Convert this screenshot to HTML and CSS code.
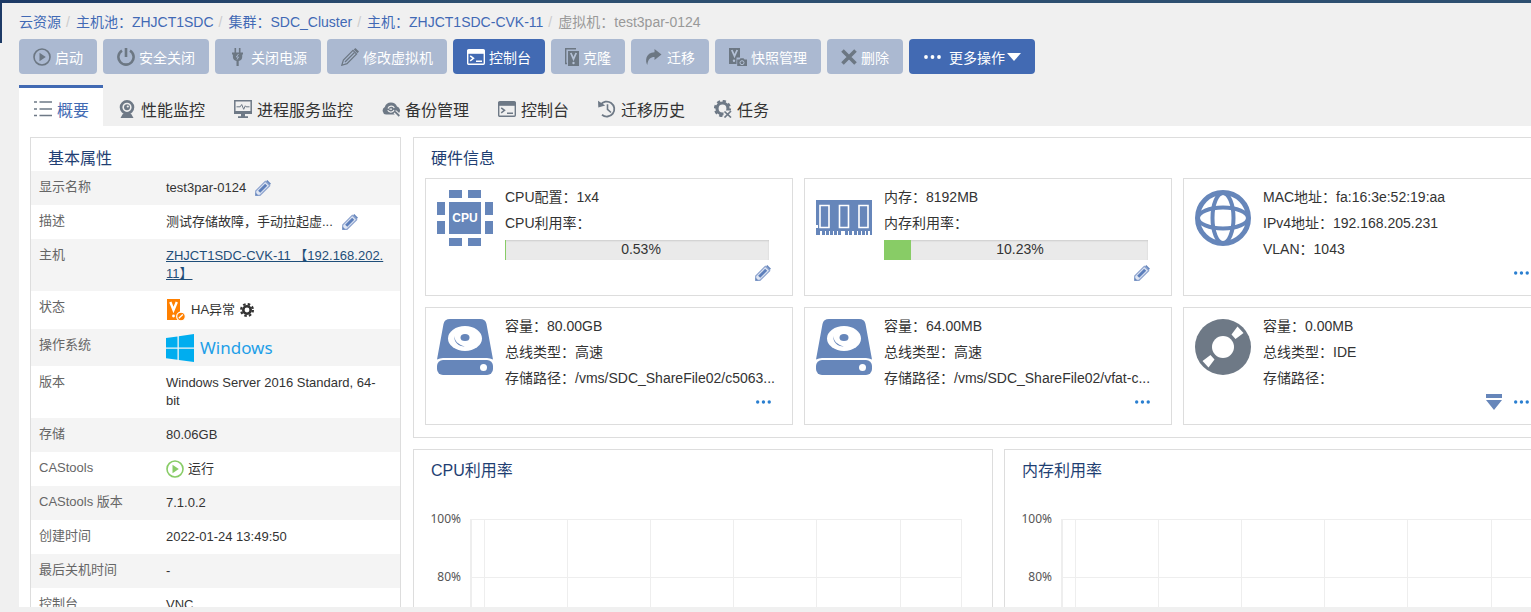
FILE: index.html
```html
<!DOCTYPE html>
<html lang="zh-CN">
<head>
<meta charset="UTF-8">
<meta name="viewport" content="width=device-width, initial-scale=1.0">
<title>test3par-0124</title>
<link rel="stylesheet" href="styles.css">
</head>
<body>

<!-- shared icons -->
<svg class="sprite" aria-hidden="true">
  <symbol id="i-play" viewBox="0 0 18 18">
    <circle cx="9" cy="9" r="8" fill="none" stroke="currentColor" stroke-width="1.6"/>
    <path d="M6.5 4.8v8.4L12.8 9z" fill="currentColor"/>
  </symbol>
  <symbol id="i-power" viewBox="0 0 18 18">
    <path d="M5 2.6A7.6 7.6 0 1 0 13 2.6" fill="none" stroke="currentColor" stroke-width="2.6"/>
    <path d="M9 0v9" stroke="currentColor" stroke-width="2.6"/>
  </symbol>
  <symbol id="i-plug" viewBox="0 0 18 18">
    <path d="M6.3 0v5M10.7 0v5" stroke="currentColor" stroke-width="1.6"/>
    <path d="M3 4.500h11v2h-.8v2.500c0 2.200-1.500 3.700-3.500 4V18H7.500v-5c-2-.3-3.600-1.800-3.600-4V6.500H3z" fill="currentColor"/>
    <path d="M9.500 6L7.300 9h2.200L8 11.500" fill="none" stroke="#aab9d1" stroke-width=".9"/>
  </symbol>
  <symbol id="i-pencil-line" viewBox="0 0 18 18">
    <path d="M.8 17.200L2.400 12 12 2.400l3.600 3.600L6 15.600z" fill="none" stroke="currentColor" stroke-width="1.200"/>
    <path d="M4 14L13.500 4.500" stroke="currentColor" stroke-width="1.200"/>
    <path d="M12.800 1.600L14.400 0 18 3.600l-1.600 1.600z" fill="currentColor"/>
  </symbol>
  <symbol id="i-console" viewBox="0 0 18 16">
    <rect x=".7" y=".7" width="16.600" height="14.600" rx="1" fill="none" stroke="currentColor" stroke-width="1.400"/>
    <path d="M.5 1h17v3.800H.5z" fill="currentColor"/>
    <path d="M3.200 6.800l3.300 2.500-3.300 2.500M9 12.200h6" fill="none" stroke="currentColor" stroke-width="1.500"/>
  </symbol>
  <symbol id="i-clone" viewBox="0 0 14 18">
    <path d="M11 .7H.7V15.500H2" fill="none" stroke="currentColor" stroke-width="1.400"/>
    <path d="M3 3h11v15H3z" fill="currentColor"/>
    <path d="M5.800 5l2.700 6L11.200 5" fill="none" stroke="#b4c1d6" stroke-width="1.800"/>
    <circle cx="8.500" cy="15" r="1.200" fill="#b4c1d6"/>
  </symbol>
  <symbol id="i-move" viewBox="0 0 18 18">
    <path d="M9.500 1l7 5.500-7 5.500V9C5.500 9 3 11 2.300 17 0 13 .5 4.500 9.500 4.200z" fill="currentColor"/>
  </symbol>
  <symbol id="i-snapshot" viewBox="0 0 18 18">
    <path d="M0 0h11v9.500H7.500V16H0z" fill="currentColor"/>
    <path d="M2.800 2l2.700 6L8.200 2" fill="none" stroke="#b4c1d6" stroke-width="1.800"/>
    <circle cx="5" cy="12.700" r="1.200" fill="#b4c1d6"/>
    <path d="M8.200 11.500h2.300l1-1.200h3l1 1.200H18V18H8.200z" fill="currentColor"/>
    <circle cx="13" cy="14.700" r="2" fill="none" stroke="#b4c1d6"/>
  </symbol>
  <symbol id="i-cross" viewBox="0 0 16 16">
    <path d="M1.500 1.500l13 13M14.500 1.500l-13 13" stroke="currentColor" stroke-width="3.600"/>
  </symbol>
  <symbol id="i-dots" viewBox="0 0 18 18">
    <circle cx="3" cy="9" r="1.900" fill="currentColor"/>
    <circle cx="9.500" cy="9" r="1.900" fill="currentColor"/>
    <circle cx="16" cy="9" r="1.900" fill="currentColor"/>
  </symbol>
  <symbol id="i-list" viewBox="0 0 18 18">
    <path d="M0 2h3M0 9h3M0 15.500h3M5.500 2H18M5.500 9H18M5.500 15.500H18" stroke="currentColor" stroke-width="1.600"/>
  </symbol>
  <symbol id="i-webcam" viewBox="0 0 18 18">
    <path fill-rule="evenodd" d="M9 0a7.300 7.300 0 1 0 0 14.600A7.300 7.300 0 0 0 9 0zm0 2.700a4.600 4.600 0 1 1 0 9.200 4.600 4.600 0 0 1 0-9.200z" fill="currentColor"/>
    <circle cx="9" cy="7.300" r="3" fill="currentColor"/>
    <circle cx="9.800" cy="6.500" r="1.100" fill="#f0f0f0"/>
    <path d="M5 13.500h8l2.500 4.500h-13z" fill="currentColor"/>
  </symbol>
  <symbol id="i-monitor" viewBox="0 0 18 18">
    <path d="M.8.8h16.400v12.400H.8z" fill="none" stroke="currentColor" stroke-width="1.500"/>
    <path d="M0 11h18v3H0zM7 14h4v2.300h3V18H4v-1.700h3z" fill="currentColor"/>
    <path d="M2.500 6.800h3.700l1.500-2.300 2 4.800 1.600-3.500.8 1h3.400" fill="none" stroke="currentColor"/>
  </symbol>
  <symbol id="i-cloud" viewBox="0 0 18 18">
    <path d="M4 14.500A4 4 0 0 1 2.800 7 6.500 6.500 0 0 1 15 6.500a4 4 0 0 1 2 6.500l-3.500-3 .5 4.500z" fill="currentColor"/>
    <path d="M6 8.500C7 5.500 11 5.500 12.300 8M12 10c-1 2.700-5 2.700-6.300.3M7.500 9.200H10" fill="none" stroke="#f0f0f0" stroke-width="1.200"/>
    <path d="M13 12l4.300 4.500" stroke="#f0f0f0" stroke-width="4"/>
    <path d="M13 11.700l4.300 4.300" stroke="currentColor" stroke-width="1.800"/>
  </symbol>
  <symbol id="i-history" viewBox="0 0 18 18">
    <path d="M2.500 5A7.500 7.500 0 1 1 4 14.800" fill="none" stroke="currentColor" stroke-width="1.800"/>
    <path d="M0 .8L7.200 5.500.3 7.500z" fill="currentColor"/>
    <path d="M9.500 4.300v5l3.500 3.200" fill="none" stroke="currentColor" stroke-width="1.600"/>
  </symbol>
  <symbol id="i-task" viewBox="0 0 18 18">
    <circle cx="8.500" cy="8.500" r="5.500" fill="none" stroke="currentColor" stroke-width="3.200"/>
    <circle cx="8.500" cy="8.500" r="7.500" fill="none" stroke="currentColor" stroke-width="2.200" stroke-dasharray="3.300 2.590"/>
    <path d="M9.500 10.500h8.500V18H9.500z" fill="#f0f0f0"/>
    <path d="M10.500 11.500l6.500 6M17 11l-6.500 6.500" stroke="currentColor" stroke-width="1.700"/>
  </symbol>
  <symbol id="i-edit" viewBox="0 0 16 16">
    <path d="M.7 15.300V11L10.300 1.300 14.700 5.700 5 15.300z" fill="#dfe6f3" stroke="#8fa5cf" stroke-width="1.200"/>
    <path d="M4.200 11.800l7-7" stroke="#5d7fbb" stroke-width="3"/>
    <path d="M11 1.200L12.300 0 16 3.700l-1.300 1.300zM.5 12.500l3 3H.5z" fill="#6787bd"/>
  </symbol>
  <symbol id="i-gear" viewBox="0 0 14 14">
    <circle cx="7" cy="7" r="3.700" fill="none" stroke="currentColor" stroke-width="2.600"/>
    <circle cx="7" cy="7" r="5.900" fill="none" stroke="currentColor" stroke-width="2.200" stroke-dasharray="2.500 2.134"/>
  </symbol>
  <symbol id="i-vm-alarm" viewBox="0 0 20 22">
    <path d="M1 0h13v21H1z" fill="#ff8000"/>
    <path d="M4.300 3l3.200 8L10.800 3" fill="none" stroke="#fff" stroke-width="2.400"/>
    <circle cx="7.500" cy="17" r="1.400" fill="#fff"/>
    <circle cx="15" cy="17.500" r="4.300" fill="#ff8000" stroke="#fff" stroke-width="1.200"/>
    <path d="M12.800 19.300l4-3.700" stroke="#fff" stroke-width="1.300"/>
  </symbol>
  <symbol id="i-windows" viewBox="0 0 28 28">
    <path d="M0 4l11.500-1.600v11.100H0zM12.800 2.200L28 0v13.500H12.800zM0 14.700h11.500v11.100L0 24.200zM12.800 14.700H28V28l-15.200-2.100z" fill="#00adef"/>
  </symbol>
  <symbol id="i-disk" viewBox="0 0 56 56">
    <path d="M13 0h30q5.500 0 6.500 5L56 40.500q-3-1.500-6-1.500H6q-3 0-6 1.500L6.500 5Q7.500 0 13 0z" fill="#6686ba"/>
    <rect x="0" y="41" width="56" height="15" rx="6" fill="#6686ba"/>
    <ellipse cx="28" cy="19.500" rx="17" ry="12.500" fill="#fff"/>
    <ellipse cx="28" cy="18.500" rx="4.500" ry="3.500" fill="#6686ba"/>
    <path d="M17.500 17C17.500 22 21 25.500 28 27.500 21 27.500 16.500 22.500 17.500 17z" fill="#6686ba"/>
    <circle cx="46.500" cy="48.500" r="3.500" fill="#fff"/>
  </symbol>
  <symbol id="i-cpu" viewBox="0 0 56 56">
    <path d="M12 0h13v8H12zM31 0h13v8H31zM12 48h13v8H12zM31 48h13v8H31zM0 12h8v13H0zM0 31h8v13H0zM48 12h8v13h-8zM48 31h8v13h-8zM12 12h32v32H12z" fill="#6686ba"/>
    <text x="28" y="32" text-anchor="middle" class="chip-text">CPU</text>
  </symbol>
  <symbol id="i-memory" viewBox="0 0 56 56">
    <path d="M0 10h56v31H0zM0 41h4v4H0zM6 41h3v4H6zM10 41h3v4h-3zM14 41h3v4h-3zM18 41h3v4h-3zM22 41h3v4h-3zM29 41h3v4h-3zM33 41h3v4h-3zM38 41h3v4h-3zM42 41h3v4h-3zM46 41h3v4h-3zM50 41h2v4h-2zM54 41h2v4h-2z" fill="#6686ba"/>
    <path d="M4 15.500h9v22H4zM23.500 15.500h9v22h-9zM43 15.500h9v22h-9z" fill="#6686ba" stroke="#fff" stroke-width="1.600"/>
    <path d="M0 35h2v3H0z" fill="#fff"/>
  </symbol>
  <symbol id="i-globe" viewBox="0 0 56 56">
    <g fill="none" stroke="#6686ba" stroke-width="4">
      <circle cx="28" cy="28" r="25.500" stroke-width="5"/>
      <ellipse cx="28" cy="28" rx="10.500" ry="25"/>
      <ellipse cx="28" cy="28" rx="25" ry="10.500"/>
    </g>
  </symbol>
  <symbol id="i-disc" viewBox="0 0 56 56">
    <circle cx="28" cy="28" r="28" fill="#6e7986"/>
    <circle cx="28" cy="28" r="11" fill="#fff"/>
    <path d="M36.500 15.500L42.500 7.500l6 6.500-8 6zM19.500 40.500L13.500 48.500l-6-6.500 8-6z" fill="#fff"/>
  </symbol>
  <symbol id="i-eject" viewBox="0 0 16 16">
    <path d="M0 0h16v4H0zM0 6h16L8 16z" fill="#6686ba"/>
  </symbol>
</svg>

<div class="topbar"></div>
<div class="page">
  <div class="side"></div>
  <main class="main">

    <nav class="breadcrumb" aria-label="路径">
      <a href="#">云资源</a>
      <a href="#">主机池：ZHJCT1SDC</a>
      <a href="#">集群：SDC_Cluster</a>
      <a href="#">主机：ZHJCT1SDC-CVK-11</a>
      <span>虚拟机：test3par-0124</span>
    </nav>

    <div class="toolbar">
      <button class="btn" disabled><svg class="icon"><use href="#i-play"/></svg>启动</button>
      <button class="btn" disabled><svg class="icon"><use href="#i-power"/></svg>安全关闭</button>
      <button class="btn" disabled><svg class="icon"><use href="#i-plug"/></svg>关闭电源</button>
      <button class="btn" disabled><svg class="icon"><use href="#i-pencil-line"/></svg>修改虚拟机</button>
      <button class="btn"><svg class="icon"><use href="#i-console"/></svg>控制台</button>
      <button class="btn" disabled><svg class="icon icon-narrow"><use href="#i-clone"/></svg>克隆</button>
      <button class="btn" disabled><svg class="icon"><use href="#i-move"/></svg>迁移</button>
      <button class="btn" disabled><svg class="icon"><use href="#i-snapshot"/></svg>快照管理</button>
      <button class="btn" disabled><svg class="icon icon-cross"><use href="#i-cross"/></svg>删除</button>
      <button class="btn btn-more"><svg class="icon"><use href="#i-dots"/></svg>更多操作<span class="caret"></span></button>
    </div>

    <nav class="tabs" aria-label="标签">
      <a class="tab active" href="#"><svg class="icon"><use href="#i-list"/></svg>概要</a>
      <a class="tab" href="#"><svg class="icon"><use href="#i-webcam"/></svg>性能监控</a>
      <a class="tab" href="#"><svg class="icon"><use href="#i-monitor"/></svg>进程服务监控</a>
      <a class="tab" href="#"><svg class="icon"><use href="#i-cloud"/></svg>备份管理</a>
      <a class="tab" href="#"><svg class="icon"><use href="#i-console"/></svg>控制台</a>
      <a class="tab" href="#"><svg class="icon"><use href="#i-history"/></svg>迁移历史</a>
      <a class="tab" href="#"><svg class="icon"><use href="#i-task"/></svg>任务</a>
    </nav>

    <div class="content">
      <div class="dashboard">

        <section class="panel props">
          <h2 class="panel-title">基本属性</h2>
          <table class="props-table">
            <tr>
              <th scope="row">显示名称</th>
              <td><div class="value">test3par-0124<button class="icon-btn" aria-label="编辑"><svg><use href="#i-edit"/></svg></button></div></td>
            </tr>
            <tr>
              <th scope="row">描述</th>
              <td><div class="value">测试存储故障，手动拉起虚...<button class="icon-btn" aria-label="编辑"><svg><use href="#i-edit"/></svg></button></div></td>
            </tr>
            <tr>
              <th scope="row">主机</th>
              <td><a class="host" href="#">ZHJCT1SDC-CVK-11 【192.168.202.<br>11】</a></td>
            </tr>
            <tr>
              <th scope="row">状态</th>
              <td><div class="value state"><svg class="vm-icon"><use href="#i-vm-alarm"/></svg>HA异常<svg class="gear"><use href="#i-gear"/></svg></div></td>
            </tr>
            <tr>
              <th scope="row">操作系统</th>
              <td class="os-cell"><div class="value os"><svg class="os-icon"><use href="#i-windows"/></svg>Windows</div></td>
            </tr>
            <tr>
              <th scope="row">版本</th>
              <td>Windows Server 2016 Standard, 64-<br>bit</td>
            </tr>
            <tr>
              <th scope="row">存储</th>
              <td>80.06GB</td>
            </tr>
            <tr>
              <th scope="row">CAStools</th>
              <td><div class="value run"><svg class="icon"><use href="#i-play"/></svg>运行</div></td>
            </tr>
            <tr>
              <th scope="row">CAStools 版本</th>
              <td>7.1.0.2</td>
            </tr>
            <tr>
              <th scope="row">创建时间</th>
              <td>2022-01-24 13:49:50</td>
            </tr>
            <tr>
              <th scope="row">最后关机时间</th>
              <td>-</td>
            </tr>
            <tr>
              <th scope="row">控制台</th>
              <td>VNC</td>
            </tr>
          </table>
        </section>

        <div class="right">
          <section class="panel">
            <h2 class="panel-title">硬件信息</h2>
            <div class="cards">

              <div class="card">
                <svg class="card-icon"><use href="#i-cpu"/></svg>
                <div class="card-info">
                  <p>CPU配置：1x4</p>
                  <p>CPU利用率：</p>
                  <div class="progress"><div class="bar" style="width: 0.53%"></div><span>0.53%</span></div>
                </div>
                <div class="card-actions">
                  <button class="icon-btn" aria-label="编辑"><svg><use href="#i-edit"/></svg></button>
                </div>
              </div>

              <div class="card">
                <svg class="card-icon"><use href="#i-memory"/></svg>
                <div class="card-info">
                  <p>内存：8192MB</p>
                  <p>内存利用率：</p>
                  <div class="progress"><div class="bar" style="width: 10.23%"></div><span>10.23%</span></div>
                </div>
                <div class="card-actions">
                  <button class="icon-btn" aria-label="编辑"><svg><use href="#i-edit"/></svg></button>
                </div>
              </div>

              <div class="card">
                <svg class="card-icon"><use href="#i-globe"/></svg>
                <div class="card-info">
                  <p>MAC地址：fa:16:3e:52:19:aa</p>
                  <p>IPv4地址：192.168.205.231</p>
                  <p>VLAN：1043</p>
                </div>
                <div class="card-actions">
                  <button class="icon-btn" aria-label="更多"><svg><use href="#i-dots"/></svg></button>
                </div>
              </div>

              <div class="card">
                <svg class="card-icon"><use href="#i-disk"/></svg>
                <div class="card-info">
                  <p>容量：80.00GB</p>
                  <p>总线类型：高速</p>
                  <p>存储路径：/vms/SDC_ShareFile02/c5063...</p>
                </div>
                <div class="card-actions">
                  <button class="icon-btn" aria-label="更多"><svg><use href="#i-dots"/></svg></button>
                </div>
              </div>

              <div class="card">
                <svg class="card-icon"><use href="#i-disk"/></svg>
                <div class="card-info">
                  <p>容量：64.00MB</p>
                  <p>总线类型：高速</p>
                  <p>存储路径：/vms/SDC_ShareFile02/vfat-c...</p>
                </div>
                <div class="card-actions">
                  <button class="icon-btn" aria-label="更多"><svg><use href="#i-dots"/></svg></button>
                </div>
              </div>

              <div class="card">
                <svg class="card-icon"><use href="#i-disc"/></svg>
                <div class="card-info">
                  <p>容量：0.00MB</p>
                  <p>总线类型：IDE</p>
                  <p>存储路径：</p>
                </div>
                <div class="card-actions">
                  <button class="icon-btn" aria-label="弹出"><svg><use href="#i-eject"/></svg></button>
                  <button class="icon-btn" aria-label="更多"><svg><use href="#i-dots"/></svg></button>
                </div>
              </div>

            </div>
          </section>

          <div class="charts">
            <section class="panel">
              <h2 class="panel-title">CPU利用率</h2>
              <svg class="chart" width="578" height="320">
                <path d="M57 36H548M57 94H548M57 152H548M57 210H548M57 268H548" class="grid-line"/>
                <path d="M70 36V326M153 36V326M236 36V326M319 36V326M402 36V326M486 36V326M547 36V326" class="grid-line"/>
                <path d="M57 36V326" class="axis-line"/>
                <text x="47" y="40">100%</text>
                <text x="47" y="98">80%</text>
              </svg>
            </section>
            <section class="panel">
              <h2 class="panel-title">内存利用率</h2>
              <svg class="chart" width="578" height="320">
                <path d="M57 36H548M57 94H548M57 152H548M57 210H548M57 268H548" class="grid-line"/>
                <path d="M70 36V326M153 36V326M236 36V326M319 36V326M402 36V326M486 36V326M547 36V326" class="grid-line"/>
                <path d="M57 36V326" class="axis-line"/>
                <text x="47" y="40">100%</text>
                <text x="47" y="98">80%</text>
              </svg>
            </section>
          </div>
        </div>

      </div>
    </div>
  </main>
</div>

</body>
</html>
```
FILE: styles.css
```css
* {
  box-sizing: border-box;
}
body {
  margin: 0;
  height: 100vh;
  display: flex;
  flex-direction: column;
  overflow: hidden;
  background-color: #f0f0f0;
  color: #333;
  font-family: "Liberation Sans", "Noto Sans CJK SC", sans-serif;
  font-size: 14px;
}
a {
  text-decoration: none;
}
button {
  font-family: inherit;
  font-size: 14px;
  border: none;
  padding: 0;
  cursor: pointer;
}
h2, p {
  margin: 0;
  font-weight: normal;
}
.sprite {
  display: none;
}
.icon {
  width: 18px;
  height: 18px;
  flex: none;
}

/* frame */
.topbar {
  height: 3px;
  flex: none;
  background: linear-gradient(to right, #1d3a66, #2d4f70 30%);
}
.page {
  flex: 1;
  min-height: 0;
  display: flex;
}
.side {
  width: 2px;
  background: linear-gradient(#1d3a66 40px, #f0f0f0 40px);
}
.main {
  flex: 1;
  min-width: 0;
  display: flex;
  flex-direction: column;
  padding: 0 0 5px 17px;
}

/* breadcrumb */
.breadcrumb {
  display: flex;
  padding-top: 9px;
  line-height: 20px;
  color: #999;
}
.breadcrumb a {
  color: #4169b5;
}
.breadcrumb a::after {
  content: "/";
  padding: 0 6px 0 5px;
  color: #ccc;
}

/* buttons */
.toolbar {
  display: flex;
  gap: 6px;
  padding-top: 7px;
}
.btn {
  display: flex;
  align-items: center;
  gap: 4px;
  height: 35px;
  padding: 0 14px;
  border-radius: 4px;
  background-color: #426ab3;
  color: #fff;
}
.btn:disabled {
  background-color: #abb9d1;
  cursor: default;
}
.btn:disabled .icon {
  color: #6c7783;
}
.icon-narrow {
  width: 14px;
}
.icon-cross {
  width: 16px;
}
.btn-more .icon {
  margin-right: 4px;
}
.caret {
  border: 7px solid transparent;
  border-top: 8px solid #fff;
  border-bottom: 0;
  margin-left: -2px;
}

/* tabs */
.tabs {
  display: flex;
  padding-top: 11px;
}
.tab {
  display: flex;
  align-items: center;
  gap: 5px;
  height: 41px;
  padding: 6px 14px 0 15px;
  font-size: 16px;
  color: #333;
}
.tab .icon {
  color: #6e7986;
}
.tab.active {
  padding-top: 3px;
  border-top: 3px solid #426ab3;
  background-color: #fff;
  color: #426ab3;
}

/* content runs past the right edge and below the bottom */
.content {
  flex: 1;
  min-height: 0;
  overflow: hidden;
  background-color: #fff;
}
.dashboard {
  display: flex;
  align-items: flex-start;
  gap: 12px;
  margin-right: -64px;
  padding: 11px;
}
.panel {
  border: 1px solid #ddd;
  background-color: #fff;
}
.panel-title {
  padding: 8px 17px 0;
  font-size: 16px;
  line-height: 25px;
  color: #1f3f73;
}

/* properties */
.props {
  flex: 0 0 371px;
}
.props-table {
  width: 100%;
  border-collapse: collapse;
  font-size: 13px;
  line-height: 18px;
}
.props-table tr:nth-child(odd) {
  background-color: #f4f4f4;
}
.props-table th,
.props-table td {
  padding: 8px 0;
  text-align: left;
  vertical-align: top;
  font-weight: normal;
}
.props-table th {
  width: 135px;
  padding-top: 7px;
  padding-left: 8px;
  color: #666;
}
.props-table .os-cell {
  padding: 4px 0;
}
.value {
  display: flex;
  align-items: center;
  gap: 9px;
  height: 18px;
}
.state {
  gap: 5px;
  height: 22px;
}
.vm-icon {
  width: 20px;
  height: 22px;
}
.gear {
  width: 14px;
  height: 14px;
}
.os {
  gap: 6px;
  height: 29px;
  font-family: "Noto Sans", sans-serif;
  font-size: 17px;
  color: #1e9fe8;
}
.os-icon {
  width: 28px;
  height: 28px;
}
.run {
  gap: 4px;
}
.run .icon {
  color: #88cc66;
}
.host {
  color: #1f4e79;
  text-decoration: underline;
}
.icon-btn {
  width: 16px;
  height: 16px;
  background: none;
  color: #2a7fd0;
}
.icon-btn svg {
  display: block;
  width: 16px;
  height: 16px;
}

/* hardware cards */
.right {
  flex: 1;
  min-width: 0;
}
.cards {
  display: grid;
  grid-template-columns: repeat(3, 1fr);
  gap: 11px;
  padding: 7px 32px 12px 11px;
}
.card {
  display: grid;
  grid-template-columns: 56px 1fr;
  column-gap: 12px;
  padding: 5px 21px 12px 11px;
  border: 1px solid #ddd;
}
.card-icon {
  width: 56px;
  height: 56px;
  margin-top: 6px;
}
.card-info {
  line-height: 26px;
  min-width: 0;
  white-space: nowrap;
}
.card-actions {
  grid-column: 1 / span 2;
  display: flex;
  justify-content: flex-end;
  align-items: center;
  gap: 11px;
  height: 21px;
}
.progress {
  display: grid;
  height: 20px;
  margin: 4px 2px 2px 0;
  background-color: #eaeaea;
  box-shadow: inset 0 1px 2px #ccc;
  line-height: 18px;
}
.progress .bar {
  grid-area: 1 / 1;
  background-color: #88cc66;
}
.progress span {
  grid-area: 1 / 1;
  padding-left: 8px;
  text-align: center;
}
.chip-text {
  font-size: 12px;
  font-weight: bold;
  fill: #fff;
}

/* charts */
.charts {
  display: grid;
  grid-template-columns: 1fr 1fr;
  gap: 11px;
  margin-top: 11px;
}
.chart {
  display: block;
}
.chart text {
  font-family: "Noto Sans", sans-serif;
  font-size: 12px;
  text-anchor: end;
  fill: #555;
}
.grid-line {
  fill: none;
  stroke: #eee;
  shape-rendering: crispEdges;
}
.axis-line {
  stroke: #eee;
  stroke-width: 2;
}
```
